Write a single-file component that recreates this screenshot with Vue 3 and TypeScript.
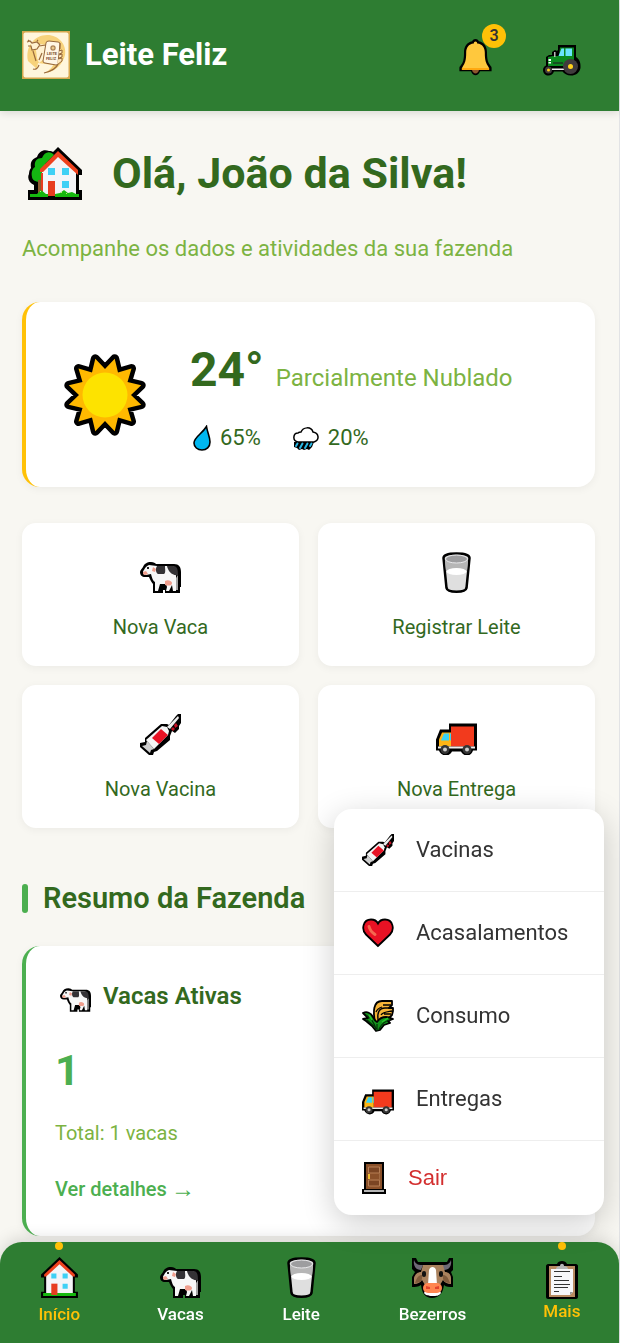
<script setup lang="ts">
import { ref } from 'vue'

interface Item {
  icon: string
  label: string
}

const userName = 'João da Silva'
const notifications = 3
const menuOpen = ref(true)

const actions: Item[] = [
  { icon: 'cow', label: 'Nova Vaca' },
  { icon: 'glass', label: 'Registrar Leite' },
  { icon: 'syringe', label: 'Nova Vacina' },
  { icon: 'truck', label: 'Nova Entrega' },
]

const menuItems: Item[] = [
  { icon: 'syringe', label: 'Vacinas' },
  { icon: 'heart', label: 'Acasalamentos' },
  { icon: 'wheat', label: 'Consumo' },
  { icon: 'truck', label: 'Entregas' },
]

const navItems: Item[] = [
  { icon: 'home', label: 'Início' },
  { icon: 'cow', label: 'Vacas' },
  { icon: 'glass', label: 'Leite' },
  { icon: 'cowface', label: 'Bezerros' },
]

// Twelve-ray star, alternating between tip and notch radius.
const sunPoints = Array.from({ length: 24 }, (_, i) => {
  const radius = i % 2 === 0 ? 26 : 37.5
  const angle = (i * Math.PI) / 12
  return `${(41 + radius * Math.sin(angle)).toFixed(1)},${(41 - radius * Math.cos(angle)).toFixed(1)}`
}).join(' ')
</script>

<template>
  <svg class="sprite" aria-hidden="true">
    <symbol id="i-bell" viewBox="0 0 33 38">
      <path d="M16.500 1c-2 0-3 1-3.300 2.300C7.500 4.500 5 9 5 14.500c0 7-1 10-3 12.500-1 1.300-1.600 2-1.600 3v3.200H12c1 2.700 2.600 4 4.500 4s3.500-1.300 4.500-4h11.600V30c0-1-.6-1.700-1.600-3-2-2.500-3-5.500-3-12.500C28 9 25.500 4.500 19.800 3.300 19.500 2 18.500 1 16.500 1z" fill="#000" />
      <path d="M13 32h7c-.5 2.200-2 3.400-3.500 3.400S13.500 34.200 13 32z" fill="#8e562e" />
      <path d="M16.500 3.500c-1 0-1.500.7-1.700 1.900C9.500 6 7.200 9.500 7.200 14.500c0 8-1.300 11-3.400 14L3 30h27l-.8-1.500c-2.100-3-3.400-6-3.400-14 0-5-2.300-8.500-7.600-9.100-.2-1.200-.7-1.900-1.700-1.900z" fill="#ffc83d" />
      <path d="M2.800 30h27.400v2H2.800z" fill="#ffa810" />
    </symbol>

    <symbol id="i-tractor" viewBox="0 0 38 31">
      <path d="M15 0h18v12c3 2 5 5 4.500 11-1 5-5 7.500-9.500 7.500-4 0-7-2-8.500-4h-8.500c-1 2.500-3 4-5.500 4C2.500 30.500 0 28.500 0 25c0-2 1-3.500 3-4.500V12l3-2h3V7l3-2 2 1 1-1z" fill="#000" />
      <path d="M17 2.500h14V14l-1 7h-25v-9l5-1h6z" fill="#0b8a20" />
      <path d="M11 7h1.500v5H11z" fill="#bbb" />
      <path d="M18.500 3.500h2.500V11h-5.500zM22.500 3.500h6.500v7.500h-6.500z" fill="#69e4ff" />
      <path d="M10 17h10v2H10z" fill="#154d20" /><path d="M9 23.500h12V25H9z" fill="#eee" />
      <path d="M5.500 14h2.500v2H5.500zM5.500 17h2.500v1.500H5.500z" fill="#fff" />
      <circle cx="27.500" cy="21.500" r="7.500" fill="#403b3d" /><circle cx="27.500" cy="21.500" r="2.500" fill="#ffd21c" />
      <circle cx="5.500" cy="25" r="3.500" fill="#403b3d" /><circle cx="5.500" cy="25" r="1.500" fill="#ffd21c" />
    </symbol>

    <symbol id="i-garden" viewBox="0 0 54 53">
      <path d="M30 0l24 23v5h-3v15h3v10H0V43h6v-5C1 36-1 31 1 27c0-3 1-5 2-6-1-6 1-9 6-11 2-6 7-8 12-6 2 0 3 0 4 1z" fill="#000" />
      <path d="M26 8c-4-5-10-3-12 3-5 0-8 3-7 9-3 2-4 6-3 10 0 3 4 5 9 5v12h4V17z" fill="#14b512" />
      <path d="M10 33h4v13h-4z" fill="#8d5a31" />
      <path d="M30 7l18 17v24H14V23z" fill="#f4f4f7" />
      <path d="M30 4L12 22v3h3L30 10l20 18v-5z" fill="#ee421e" />
      <path d="M20 21h7v7h-7zM34 21h7v7h-7zM34 34h7v7h-7z" fill="#3fd0f5" />
      <path d="M20 34h7v15h-7zM13 26h2v21h-2z" fill="#e73c20" />
      <path d="M2 47l7 0 4-4 5 4h2v3H2zM27 47l5-1 4-3 4 3 4-1 4 2h3v3H27z" fill="#16b80f" />
      <path d="M12 44h1v1h-1zM33 45h1v1h-1zM38 46h1v1h-1z" fill="#b8f06d" />
    </symbol>

    <symbol id="i-home" viewBox="0 0 36 40">
      <path d="M18 0l18 17v3h-3v14h3v6H0v-6h3V20H0v-3z" fill="#000" />
      <path d="M18 5l13 13v17H5V18z" fill="#f4f4f7" />
      <path d="M18 3L3 17v2h2L18 7l13 12h2v-2z" fill="#ee421e" />
      <path d="M10 16h5v5h-5zM21 16h5v5h-5zM21 26h5v5h-5z" fill="#3fd0f5" />
      <path d="M2 35h32v3H2z" fill="#16b80f" />
      <path d="M10 26h6v11h-6z" fill="#e73c20" />
    </symbol>

    <symbol id="i-sun" viewBox="0 0 82 82">
      <polygon :points="sunPoints" fill="#ffb900" stroke="#000" stroke-width="9" stroke-linejoin="round" />
      <polygon :points="sunPoints" fill="#ffb900" />
      <circle cx="41" cy="41" r="22.500" fill="#fde300" />
    </symbol>

    <symbol id="i-drop" viewBox="0 0 18 26">
      <path d="M13.500 1.500C14.500 8 17 12 17 17c0 5-3.500 8-8 8s-8-3-8-7c0-6 8-9 12.500-16.500z" fill="#00b7f0" stroke="#000" stroke-width="1.600" />
    </symbol>

    <symbol id="i-rain" viewBox="0 0 26 23">
      <path d="M5 15c-6-1-5-9 0-9 1-1 2-1 3-1 2-5 10-6 12 0 6 1 7 8 1 10z" fill="#fff" stroke="#000" stroke-width="1.500" />
      <path d="M1 15h20l-2 5-3 3-2-1-3 1-2-1-3 1-2-2-3-1z" fill="#000" />
      <path d="M4.500 16.500L3 19M9.500 16.500L7 21M14.500 16.500L12 21M18.500 16.500L17 19" stroke="#28b8e5" stroke-width="2" stroke-linecap="round" />
    </symbol>

    <symbol id="i-cow" viewBox="0 0 41 31">
      <path d="M11 0c3 0 4 1 5 2h18c5 0 7 3 7 8v15h-1v6H25v-3h-2v3H13v-9c-2-2-3-5-4-7H5c-3 0-5-2-5-5 0-2 2-3 3-5 1-3 4-5 8-5z" fill="#000" />
      <path d="M9 3C6 4 5 6 4 8c-2 2-1 5 2 5l5-1c1 4 2 7 4 8v9h3l2-7h6l1 3-1 4h3l3-6 1 6h3V10c0-4-2-6-4-6H17z" fill="#f7f7f7" />
      <path d="M17 4h8c0 3 1 7-1 8h-6c-2-1-3-5-1-8zM27 4h6c4 0 5 3 5 9-6 1-10-4-11-9z" fill="#343235" />
      <path d="M3 10l3-1 2 3-3 1c-2 0-2-2-2-3zM13 5l3 2-1 3-3-1zM25 19c3-2 7 0 7 2 0 3-4 3-7 2z" fill="#ef9e8d" />
      <path d="M7 5h2v2H7z" fill="#222" />
      <path d="M36 16l2-3v15h-2z" fill="#a3a3a3" />
    </symbol>

    <symbol id="i-glass" viewBox="0 0 29 41">
      <path d="M1.500 6c0-6 26-6 26 0l-3 30c-1 5-19 5-20 0z" fill="#dedede" stroke="#000" stroke-width="2.500" />
      <path d="M3 7l1 13c3-4 18-4 21 0l1-13c-3 5-20 5-23 0z" fill="#b6b6b6" />
      <ellipse cx="14.500" cy="7" rx="11" ry="4" fill="#9d9d9f" stroke="#e8e8ea" />
      <path d="M4.500 19h20l-2 16c-1 3-15 3-16 0z" fill="#dfdfdf" />
      <ellipse cx="14.500" cy="19.500" rx="10" ry="3.500" fill="#fff" />
    </symbol>

    <symbol id="i-syringe" viewBox="0 0 41 41">
      <path d="M38 0h3v9l-2 3v3l-4 4-3-2-2 5v4L17 37l-3 1-1 3H9L0 33v-4l5-1v-4L21 10h6l2 1L36 2z" fill="#000" />
      <path d="M38 2l1 2-9 11-3-2z" fill="#eee" />
      <path d="M22 12l5 1 2 4-1 4-14 14-8-9z" fill="#f5f5f5" />
      <path d="M21 15l7 6-9 9-7-6z" fill="#e81224" />
      <path d="M7 27l7 8-3 1-1 3-8-7 4-1z" fill="#cfcfcf" />
      <path d="M36 9l2 3-3 2-1-3zM33 13l2 2-2 2-2-2z" fill="#c50f24" />
    </symbol>

    <symbol id="i-truck" viewBox="0 0 41 32">
      <path d="M13 0h28v27h-4c-1 3-3 5-6 5s-5-2-6-4h-9c-1 2-3 4-6 4s-6-2-7-5H0V16L4 6h9z" fill="#000" />
      <path d="M15 3h23v20H15z" fill="#f23a1d" />
      <path d="M6 9h9v14H3v-7z" fill="#ffb514" />
      <path d="M8 10h5v7H5zM14 10h1v7h-1z" fill="#3ad4f2" />
      <path d="M2 23h37v2H2z" fill="#eee" />
      <circle cx="9" cy="26" r="4.500" fill="#353535" /><circle cx="9" cy="26" r="2" fill="#ccc" />
      <circle cx="31" cy="26" r="4.500" fill="#353535" /><circle cx="31" cy="26" r="2" fill="#ccc" />
    </symbol>

    <symbol id="i-heart" viewBox="0 0 32 29">
      <path d="M16 27.500L4 16C-1 11 1 1 9 1c3 0 5.500 1 7 4 1.500-3 4-4 7-4 8 0 10 10 5 15z" fill="#e81224" stroke="#000" stroke-width="1.800" />
      <path d="M7 8c1 4 3 6 6 8" fill="none" stroke="#f46a50" stroke-width="3" stroke-linecap="round" />
    </symbol>

    <symbol id="i-wheat" viewBox="0 0 32 32">
      <path d="M13 22C11 12 11 1 20 1h10v4l-3 3h4v3l-1 4-3 3h-5l-3 6z" fill="#f7b538" stroke="#000" stroke-width="1.800" stroke-linejoin="round" />
      <path d="M16 20c-1-7 1-12 7-12h4M14 12c1-3 3-4 6-5M19 15c2-3 5-3 11-4M21 5h8M22 14h7" fill="none" stroke="#000" stroke-width="1.300" />
      <path d="M14 31L10 26l-6-5-3-2 5-1-5-5c4-2 8 0 10 4 1 2 2 4 4 5 2-3 5-5 9-5 3 0 5 1 7 2l-5 2 2 2-6 2-4 5z" fill="#12931b" stroke="#000" stroke-width="1.800" stroke-linejoin="round" />
      <path d="M4 15c5 2 8 8 10 14M5 20l8 7M28 20c-5 1-9 5-11 9M15 24v7" fill="none" stroke="#042e08" stroke-width="1.200" />
      <path d="M7 15l3 5M26 18l-6 4" stroke="#26c52a" stroke-width="1.500" />
    </symbol>

    <symbol id="i-door" viewBox="0 0 24 32">
      <path d="M2 0h20v27h2v5H0v-5h2z" fill="#000" />
      <path d="M4 2h16v25H4z" fill="#8a5029" />
      <path d="M6.500 5h11v6h-11zM6.500 18h11v6h-11z" fill="#7b4523" stroke="#b77f55" />
      <path d="M17.500 11v7h-9" fill="none" stroke="#a16a42" />
      <path d="M6 12h2v5H6z" fill="#f2c230" /><path d="M2 28h20v2H2z" fill="#b5b5b5" />
    </symbol>

    <symbol id="i-cowface" viewBox="0 0 41 41">
      <path d="M0 1h4l2 4h29l2-4h4v12l-2 2 2 5v10c-4 0-7 0-9-2-1 8-5 13-12 13S10 36 9 28c-3 2-6 2-9 2V20l3-5-3-3z" fill="#000" />
      <path d="M2 3c2 5 5 5 9 5l-2 5c-5 0-8-4-7-10zM39 3c-2 5-5 5-9 5l2 5c5 0 8-4 7-10z" fill="#6d6875" />
      <path d="M2 27v-6c1-4 4-6 7-6l2-7h20l2 7c3 0 6 2 6 6v6c-4 0-7-2-8-4l-3 5H13l-3-5c-1 2-4 4-8 4z" fill="#a9815d" />
      <path d="M3 26c2-6 4-8 7-8v4c-1 3-4 4-7 4zM38 26c-2-6-4-8-7-8v4c1 3 4 4 7 4z" fill="#805b3c" />
      <path d="M16 28l1-15c1-4 6-4 7 0l1 15 4 8c-2 3-5 3-8 3s-7 0-9-3z" fill="#fff" />
      <rect x="10" y="14" width="4" height="6" rx="2" fill="#111" /><rect x="27" y="14" width="4" height="6" rx="2" fill="#111" />
      <rect x="11" y="26" width="19" height="10" rx="5" fill="#ff8650" />
      <path d="M14 29l4 1v2h-4zM27 29l-4 1v2h4z" fill="#e0442d" />
    </symbol>

    <symbol id="i-clipboard" viewBox="0 0 32 38">
      <path d="M2 3h9c1-4 9-4 10 0h9c1 0 2 1 2 2v31c0 1-1 2-2 2H2c-1 0-2-1-2-2V5c0-1 1-2 2-2z" fill="#000" />
      <path d="M3 5h26v31H3z" fill="#b88b61" />
      <path d="M5 8h22v23l-3 3H5z" fill="#f7f7fa" />
      <path d="M10 8c0-2 2-3 4-3 0-3 4-3 4 0 2 0 4 1 4 3z" fill="#b5b5b8" />
      <path d="M8 10.500h16M8 15.500h8M8 19.500h15M8 23.500h16M8 26.500h14M8 30.500h5" stroke="#333" stroke-width="1.200" />
      <path d="M24 34v-3h3z" fill="#999" />
    </symbol>
  </svg>

  <div class="page">
    <header class="topbar">
      <svg class="logo" viewBox="0 0 48 48" role="img" aria-label="Leite Feliz">
        <rect width="48" height="48" fill="#d6a94f" />
        <rect x="1.5" y="1.5" width="45" height="45" rx="2" fill="#fff6dc" />
        <path d="M6 30C3 15 13 4 25 4s20 10 18 20c-2 9-10 17-20 18 6-4 8-7 8-8l-15-2-1 6z" fill="#f7d27b" />
        <path d="M9 12c4-3 7 0 9 1l6 1-2 14-5 4-2-5-1-8-5-1z" fill="#fff1d0" />
        <path d="M5 11l3-1 2 2 5-1 3 3M6 15l3 0 1 4 5-1 2-3 7-1M11 20l3 10M20 22l-3 7M7 10l-1-1M15 10l1-1M17 34c-1 3-3 5-6 4M22 42c8-2 13-6 14-9" fill="none" stroke="#9a6a3c" stroke-width="1.2" />
        <path d="M27 10l9 1q2 0 2 2l-2 19q0 2-2 2l-11-2q-2 0-2-2l3-18q0-2 3-2z" fill="#fff6e4" stroke="#94653a" />
        <path d="M38 12v6M37 20l3-1v3l-3 1M37 24l3-1v3l-3 1M36 28l4-1v3l-5 4" fill="#ffe7b8" stroke="#94653a" />
        <rect x="29" y="15" width="4" height="4" rx="1" fill="#e9c98f" stroke="#94653a" />
        <g fill="#7d5330" font-size="4" font-weight="700" text-anchor="middle">
          <text x="30" y="24">LEITE</text>
          <text x="29" y="29">FELIZ</text>
        </g>
      </svg>
      <span class="brand">Leite Feliz</span>
      <div class="tools">
        <button type="button" class="tool" aria-label="Notificações">
          <svg class="tool-icon"><use href="#i-bell" /></svg>
          <span class="badge">{{ notifications }}</span>
        </button>
        <button type="button" class="tool" aria-label="Fazenda">
          <svg class="tool-icon tractor"><use href="#i-tractor" /></svg>
        </button>
      </div>
    </header>

    <main class="content">
      <div class="greeting">
        <svg class="greeting-icon"><use href="#i-garden" /></svg>
        <h1>Olá, {{ userName }}!</h1>
      </div>
      <p class="subtitle">Acompanhe os dados e atividades da sua fazenda</p>

      <section class="weather">
        <svg class="sun"><use href="#i-sun" /></svg>
        <div class="weather-info">
          <div class="temperature">
            <strong>24°</strong>
            <span>Parcialmente Nublado</span>
          </div>
          <div class="readings">
            <span class="reading"><svg class="drop"><use href="#i-drop" /></svg>65%</span>
            <span class="reading"><svg class="rain"><use href="#i-rain" /></svg>20%</span>
          </div>
        </div>
      </section>

      <div class="actions">
        <a v-for="action in actions" :key="action.label" href="#" class="action">
          <svg class="icon"><use :href="`#i-${action.icon}`" :class="action.icon" /></svg>
          <span>{{ action.label }}</span>
        </a>
      </div>

      <h2>Resumo da Fazenda</h2>

      <section class="summary">
        <h3><svg class="summary-icon"><use href="#i-cow" /></svg>Vacas Ativas</h3>
        <p class="count">1</p>
        <p class="total">Total: 1 vacas</p>
        <a href="#" class="details">Ver detalhes <span class="arrow">→</span></a>
      </section>
    </main>

    <nav class="bottom-nav">
      <a v-for="(item, index) in navItems" :key="item.label" href="#" class="nav-item" :class="{ active: index === 0 }">
        <svg class="icon"><use :href="`#i-${item.icon}`" :class="item.icon" /></svg>
        <span>{{ item.label }}</span>
      </a>
      <button type="button" class="nav-item more" :class="{ active: menuOpen }" :aria-expanded="menuOpen" @click="menuOpen = !menuOpen">
        <svg class="clipboard"><use href="#i-clipboard" /></svg>
        <span>Mais</span>
      </button>

      <div v-if="menuOpen" class="menu">
        <a v-for="item in menuItems" :key="item.label" href="#" class="menu-item">
          <svg class="menu-icon"><use :href="`#i-${item.icon}`" :class="item.icon" /></svg>
          <span>{{ item.label }}</span>
        </a>
        <button type="button" class="menu-item logout">
          <svg class="menu-icon door"><use href="#i-door" /></svg>
          <span>Sair</span>
        </button>
      </div>
    </nav>
  </div>
</template>

<style>
body {
  margin: 0;
  background: #f8f7f2;
}
</style>

<style scoped>
.sprite {
  position: absolute;
  width: 0;
  height: 0;
}

.page {
  font-family: Roboto, "Liberation Sans", sans-serif;
  color: #33691e;
  background: #f8f7f2;
  border-right: 1px solid #e2e3e5;
}

.page * {
  box-sizing: border-box;
}

.page svg {
  display: block;
  flex: none;
}

a {
  color: inherit;
  text-decoration: none;
}

button {
  border: 0;
  padding: 0;
  background: none;
  font-family: inherit;
  cursor: pointer;
}

h1,
h2,
h3,
p {
  margin: 0;
}

.topbar {
  display: flex;
  align-items: center;
  padding: 20px 22px 21px;
  background: #2e7d32;
  box-shadow: 0 2px 8px rgba(0, 0, 0, 0.12);
  color: #fff;
}

.logo {
  width: 48px;
  height: 48px;
}

.brand {
  margin-left: 15px;
  font-size: 31px;
  line-height: 36px;
  font-weight: 700;
}

.tools {
  display: flex;
  gap: 17px;
  margin-left: auto;
}

.tool {
  position: relative;
  display: flex;
  justify-content: center;
  align-items: flex-end;
  width: 70px;
  height: 70px;
  padding-bottom: 14px;
}

.tool-icon {
  width: 33px;
  height: 38px;
}

.tool-icon.tractor {
  width: 38px;
  height: 31px;
}

.badge {
  position: absolute;
  top: 4px;
  right: 4px;
  width: 24px;
  height: 24px;
  border-radius: 50%;
  background: #ffc107;
  color: #333;
  font-size: 16px;
  line-height: 24px;
  font-weight: 600;
  text-align: center;
}

.content {
  padding: 32px 24px 107px 22px;
}

.greeting {
  display: flex;
  align-items: center;
  gap: 30px;
  padding-left: 6px;
}

.greeting-icon {
  width: 54px;
  height: 53px;
}

h1 {
  font-size: 43px;
  line-height: 60px;
  font-weight: 700;
}

.subtitle {
  margin: 31px 0 38px;
  color: #7cb342;
  font-size: 22px;
  line-height: 30px;
}

.weather {
  display: flex;
  align-items: center;
  gap: 44px;
  padding: 36px 32px 36px 38px;
  background: #fff;
  border-left: 4px solid #ffc107;
  border-radius: 18px;
  box-shadow: 0 2px 8px rgba(0, 0, 0, 0.05);
}

.sun {
  width: 82px;
  height: 82px;
}

.temperature {
  display: flex;
  align-items: baseline;
  gap: 12px;
}

.temperature strong {
  font-size: 48px;
  line-height: 64px;
}

.temperature span {
  color: #7cb342;
  font-size: 24px;
  line-height: 32px;
}

.readings {
  display: flex;
  gap: 32px;
  margin-top: 23px;
  padding-left: 3px;
  font-size: 22px;
  line-height: 24px;
}

.reading {
  display: flex;
  align-items: center;
  gap: 9px;
}

.drop {
  width: 18px;
  height: 26px;
}

.rain {
  width: 26px;
  height: 23px;
}

.actions {
  display: grid;
  grid-template-columns: 1fr 1fr;
  gap: 19px;
  margin-top: 36px;
}

.action {
  display: flex;
  flex-direction: column;
  align-items: center;
  gap: 22px;
  padding: 29px 16px 27px;
  background: #fff;
  border-radius: 14px;
  box-shadow: 0 2px 8px rgba(0, 0, 0, 0.05);
  font-size: 20px;
  line-height: 24px;
}

.icon {
  width: 41px;
  height: 41px;
}

.icon .cow,
.icon .truck {
  transform: translateY(5px);
}

h2 {
  display: flex;
  align-items: center;
  gap: 15px;
  margin: 56px 0 33px;
  font-size: 29px;
  line-height: 29px;
  font-weight: 600;
}

h2::before {
  content: "";
  width: 6px;
  height: 29px;
  border-radius: 3px;
  background: #4caf50;
}

.summary {
  padding: 34px 29px 35px;
  background: #fff;
  border-left: 4px solid #4caf50;
  border-radius: 18px;
  box-shadow: 0 2px 8px rgba(0, 0, 0, 0.05);
}

h3 {
  display: flex;
  align-items: center;
  gap: 12px;
  padding-left: 5px;
  font-size: 24px;
  line-height: 32px;
  font-weight: 600;
}

.summary-icon {
  width: 31px;
  height: 24px;
  margin-top: 7px;
}

.count {
  margin-top: 34px;
  color: #4caf50;
  font-size: 43px;
  line-height: 48px;
  font-weight: 700;
}

.total {
  margin: 27px 0 32px;
  color: #7cb342;
  font-size: 20px;
  line-height: 24px;
}

.details {
  display: flex;
  align-items: center;
  gap: 4px;
  color: #4caf50;
  font-size: 20px;
  line-height: 24px;
  font-weight: 500;
}

.arrow {
  font-family: "Liberation Sans", sans-serif;
  font-size: 24px;
  font-weight: 400;
}

.bottom-nav {
  position: fixed;
  left: 0;
  right: 1px;
  bottom: 0;
  display: flex;
  justify-content: space-around;
  align-items: flex-start;
  background: #2e7d32;
  border-radius: 22px 22px 0 0;
  box-shadow: 0 -4px 16px rgba(0, 0, 0, 0.13);
}

.nav-item {
  position: relative;
  display: flex;
  flex-direction: column;
  align-items: center;
  gap: 6px;
  padding: 15px 0 19px;
  color: #fff;
  font-size: 17px;
  line-height: 20px;
  font-weight: 500;
}

.nav-item.more {
  gap: 2px;
  padding-top: 19px;
}

.nav-item.active {
  color: #ffc107;
}

.nav-item.active::before {
  content: "";
  position: absolute;
  top: 0;
  left: 50%;
  width: 8px;
  height: 8px;
  margin-left: -4px;
  border-radius: 50%;
  background: #ffc107;
}

.clipboard {
  width: 32px;
  height: 38px;
}

.menu {
  position: absolute;
  right: 15px;
  bottom: calc(100% + 27px);
  width: 270px;
  overflow: hidden;
  background: #fff;
  border-radius: 18px;
  box-shadow: 0 8px 32px rgba(0, 0, 0, 0.2);
}

.menu-item {
  display: flex;
  align-items: center;
  gap: 22px;
  width: 100%;
  padding: 25px 28px;
  border-bottom: 1px solid #eee;
  color: #333;
  font-size: 22px;
  line-height: 32px;
}

.menu-item.logout {
  padding: 21px 28px;
  border-bottom: 0;
  color: #d32f2f;
  font-family: "Liberation Sans", sans-serif;
}

.menu-icon {
  width: 32px;
  height: 32px;
}

.menu-icon .truck {
  transform: translateY(3px);
}

.menu-icon.door {
  width: 24px;
}
</style>
